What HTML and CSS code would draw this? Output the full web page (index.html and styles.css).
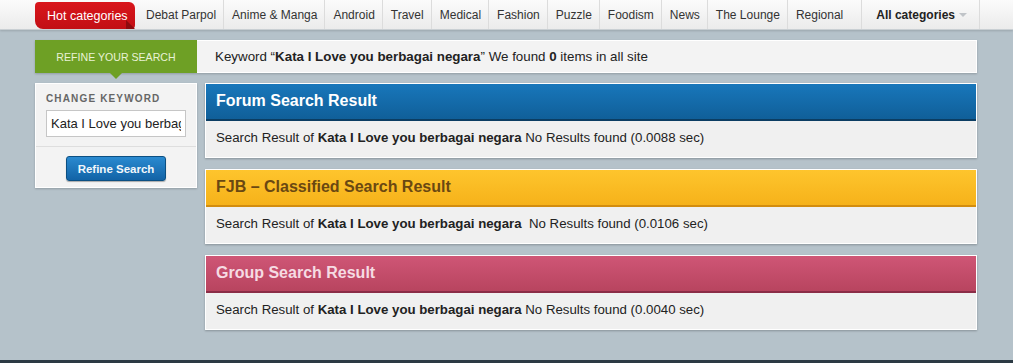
FILE: index.html
```html
<!DOCTYPE html>
<html>
<head>
<meta charset="utf-8">
<link rel="stylesheet" href="styles.css">
</head>
<body>
<nav class="topnav">
  <ul class="navlist">
    <li class="hot">Hot categories<span class="fold"></span></li>
    <li>Debat Parpol</li>
    <li>Anime &amp; Manga</li>
    <li>Android</li>
    <li>Travel</li>
    <li>Medical</li>
    <li>Fashion</li>
    <li>Puzzle</li>
    <li>Foodism</li>
    <li>News</li>
    <li>The Lounge</li>
    <li class="regional">Regional</li>
    <li class="allcat">All categories <span class="caret"></span></li>
  </ul>
</nav>
<main class="content">
  <div class="refinebar">
    <div class="refinelabel">REFINE YOUR SEARCH</div>
    <div class="keyword">Keyword “<b>Kata I Love you berbagai negara</b>” We found <b>0</b> items in all site</div>
  </div>
  <div class="row">
    <aside class="sidebar">
      <div class="sidetop">
        <div class="sidetitle">CHANGE KEYWORD</div>
        <input class="kwinput" type="text" value="Kata I Love you berbagai negara">
      </div>
      <div class="sidebottom">
        <button class="refinebtn">Refine Search</button>
      </div>
    </aside>
    <section class="results">
      <div class="panel forum">
        <div class="phead">Forum Search Result</div>
        <div class="pbody">Search Result of <b>Kata I Love you berbagai negara</b> No Results found (0.0088 sec)</div>
      </div>
      <div class="panel fjb">
        <div class="phead">FJB – Classified Search Result</div>
        <div class="pbody">Search Result of <b>Kata I Love you berbagai negara</b>&nbsp; No Results found (0.0106 sec)</div>
      </div>
      <div class="panel group">
        <div class="phead">Group Search Result</div>
        <div class="pbody">Search Result of <b>Kata I Love you berbagai negara</b> No Results found (0.0040 sec)</div>
      </div>
    </section>
  </div>
</main>
<footer class="footer"></footer>
</body>
</html>
```
FILE: styles.css
```css
* { box-sizing: border-box; }
html, body { margin: 0; padding: 0; }
body {
  font-family: "Liberation Sans", Arial, sans-serif;
  font-size: 13px;
  color: #222;
  background: #b5c2ca;
  min-height: 100vh;
  display: flex;
  flex-direction: column;
}
.topnav {
  height: 30px;
  background: linear-gradient(#fbfbfb, #ebebeb);
  border-bottom: 1px solid #c9cfd3;
  box-shadow: 0 1px 2px rgba(0,0,0,0.15);
}
.navlist {
  list-style: none;
  margin: 0;
  padding: 0 0 0 35px;
  display: flex;
  height: 29px;
  align-items: stretch;
}
.navlist li {
  display: flex;
  align-items: center;
  padding: 0 7px 0 8px;
  border-right: 1px solid #dcdcdc;
  color: #333;
  font-size: 12px;
  white-space: nowrap;
}
.navlist li.hot {
  position: relative;
  margin: 2px 3px 0 0;
  padding: 0 11px 0 12px;
  background: linear-gradient(#d9161c, #c20f14);
  color: #fff;
  border: none;
  border-radius: 4px 6px 4px 8px;
  height: 27px;
  font-size: 12.5px;
  width: 100px;
}
.fold {
  position: absolute;
  right: 0;
  bottom: 0;
  width: 0;
  height: 0;
  border-style: solid;
  border-width: 9px 0 0 9px;
  border-color: transparent transparent transparent #8e0b0e;
}
.navlist li.regional { padding-right: 18px; }
.navlist li.allcat {
  padding: 0 12px 0 14px;
  font-weight: bold;
  color: #222;
}
.caret {
  display: inline-block;
  width: 0;
  height: 0;
  margin-left: 4px;
  border-left: 4px solid transparent;
  border-right: 4px solid transparent;
  border-top: 4px solid #c0c4c8;
}
.content {
  padding: 10px 36px 0 35px;
}
.refinebar {
  display: flex;
  height: 33px;
  background: #f3f3f3;
  border: 1px solid #fff;
  box-shadow: 0 1px 2px rgba(0,0,0,0.2);
}
.refinelabel {
  position: relative;
  width: 162px;
  margin: -1px 0 -1px -1px;
  background: #6ea025;
  color: #e9f2d6;
  font-size: 10.6px;
  display: flex;
  align-items: center;
  justify-content: center;
}
.refinelabel::after {
  content: "";
  position: absolute;
  left: 75px;
  bottom: -6px;
  border-left: 6px solid transparent;
  border-right: 6px solid transparent;
  border-top: 6px solid #6ea025;
}
.keyword {
  display: flex;
  align-items: center;
  padding-left: 18px;
  font-size: 13.35px;
  white-space: pre;
}
.row {
  display: flex;
  gap: 8px;
  margin-top: 10px;
  align-items: flex-start;
}
.sidebar {
  width: 162px;
  background: #f3f3f3;
  border: 1px solid #fff;
  box-shadow: 0 1px 2px rgba(0,0,0,0.2);
}
.sidetop {
  padding: 9px 10px 9px 10px;
  border-bottom: 1px solid #dedede;
}
.sidetitle {
  font-size: 10px;
  font-weight: bold;
  color: #666;
  letter-spacing: 1.15px;
  margin-bottom: 6px;
}
.kwinput {
  width: 140px;
  height: 27px;
  border: 1px solid #c6c6c6;
  background: #fff;
  font-family: "Liberation Sans", Arial, sans-serif;
  font-size: 13px;
  color: #222;
  padding: 0 4px;
  outline: none;
}
.sidebottom {
  display: flex;
  justify-content: center;
  padding: 9px 0 6px 0;
}
.refinebtn {
  width: 100px;
  height: 25px;
  border: 1px solid #0b4f82;
  border-radius: 3px;
  background: linear-gradient(#2a8ad0, #1263a6);
  color: #f2f7fb;
  font-family: "Liberation Sans", Arial, sans-serif;
  font-size: 11.5px;
  font-weight: bold;
  box-shadow: 0 1px 1px rgba(0,0,0,0.3);
  padding: 0;
}
.results {
  flex: 1;
  display: flex;
  flex-direction: column;
  gap: 11px;
}
.panel {
  background: #f0f0f0;
  border: 1px solid #fff;
  box-shadow: 0 1px 2px rgba(0,0,0,0.25);
}
.phead {
  height: 37px;
  display: flex;
  align-items: center;
  padding: 0 0 1px 10px;
  font-size: 16px;
  font-weight: bold;
}
.pbody {
  height: 36px;
  display: flex;
  align-items: center;
  padding: 0 0 3px 10px;
  font-size: 13.25px;
  white-space: pre;
}
.forum .phead {
  background: linear-gradient(#1877bb, #105f99);
  border-bottom: 2px solid #0b3d63;
  color: #fff;
}
.fjb .phead {
  background: linear-gradient(#fec52d, #f6b21a);
  border-bottom: 2px solid #d38d0e;
  color: #6a4812;
}
.group .phead {
  background: linear-gradient(#cf5676, #b8445f);
  border-bottom: 2px solid #8b2d47;
  color: #f6dbe3;
}
.footer {
  margin-top: auto;
  height: 3px;
  background: #2c3a44;
}
```
